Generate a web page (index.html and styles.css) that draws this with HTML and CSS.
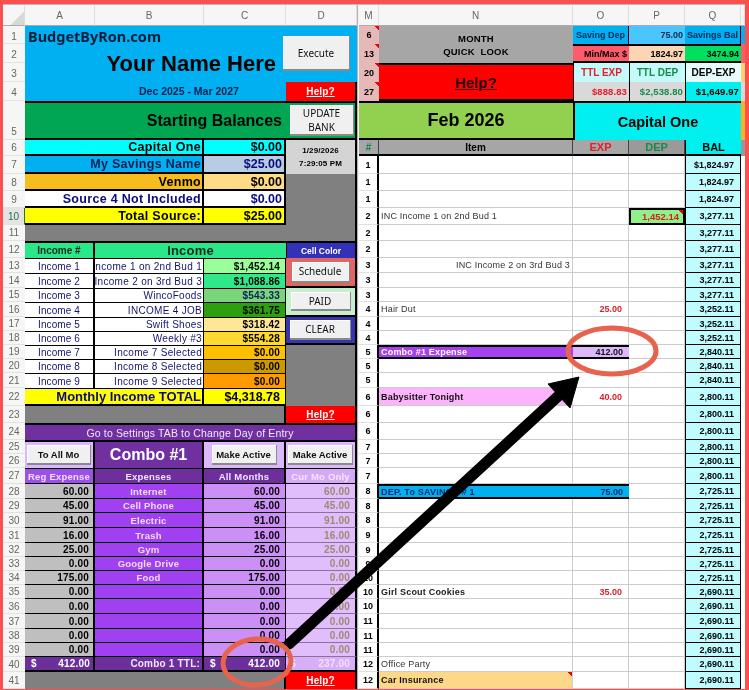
FILE: index.html
```html
<!DOCTYPE html>
<html lang="en">
<head>
<meta charset="utf-8">
<title>BudgetByRon</title>
<link rel="stylesheet" href="styles.css">
</head>
<body>
<table class="sheet">
<colgroup><col class="w-rh"><col class="w-a"><col class="w-b"><col class="w-c"><col class="w-d"><col class="w-s"><col class="w-m"><col class="w-n"><col class="w-o"><col class="w-o"><col class="w-o"><col class="w-r"></colgroup>
<tr class="h21"><td class="corner"></td><td class="ch">A</td><td class="ch">B</td><td class="ch">C</td><td class="ch">D</td><td class="split" rowspan="42"></td><td class="ch">M</td><td class="ch">N</td><td class="ch">O</td><td class="ch">P</td><td class="ch">Q</td><td class="ch"></td></tr>

<tr class="h18"><td class="rh rh-low">1</td>
<td class="blue" colspan="3" rowspan="4"><div class="title"><div class="brand">BudgetByRon.com</div><div class="owner">Your Name Here</div><div class="range">Dec 2025 - Mar 2027</div></div></td>
<td class="blue top visible" rowspan="3"><div class="btn execute">Execute</div></td>
<td class="pink tri">6</td><td class="quick" rowspan="2">MONTH<br>QUICK&nbsp; LOOK</td><td class="q-blue">Saving Dep</td><td class="q-blue2 num">75.00</td><td class="q-blue ctr">Savings Bal</td><td class="r-blue"></td></tr>
<tr class="h19"><td class="rh rh-low">2</td><td class="pink tri">13</td><td class="q-red num">Min/Max $</td><td class="q-peach num">1824.97</td><td class="q-green num">3474.94</td><td class="r-red"></td></tr>
<tr class="h19"><td class="rh rh-low">3</td><td class="pink tri">20</td><td class="bighelp" rowspan="2">Help?</td><td class="q-cy red-t big">TTL EXP</td><td class="q-cy green-t big">TTL DEP</td><td class="q-wh big">DEP-EXP</td><td class="r-or"></td></tr>
<tr class="h19"><td class="rh rh-low">4</td><td class="help">Help?</td><td class="pink tri">27</td><td class="q-gr red-t tot">$888.83</td><td class="q-gr green-t tot">$2,538.80</td><td class="q-cy2 tot">$1,649.97</td><td class="r-gr"></td></tr>

<tr class="h39"><td class="rh rh-b">5</td>
<td class="start" colspan="4"><div class="start-in"><span>Starting Balances</span><div class="btn update">UPDATE<br>BANK</div></div></td>
<td class="feb" colspan="2">Feb 2026</td><td class="capone" colspan="3">Capital One</td><td class="r-orange"></td></tr>

<tr class="h16"><td class="rh">6</td><td class="src cyan" colspan="2">Capital One</td><td class="amt cyan">$0.00</td>
<td class="stamp" rowspan="2">1/29/2026<br>7:29:05 PM</td>
<td class="hd green-t">#</td><td class="hd item">Item</td><td class="hd exp">EXP</td><td class="hd dep">DEP</td><td class="balhd">BAL</td><td class="r-dg"></td></tr>

<tr class="h18"><td class="rh">7</td><td class="src sav" colspan="2">My Savings Name</td><td class="amt sav2">$25.00</td><td class="mn">1</td><td class="n"></td><td class="o"></td><td class="o"></td><td class="bal">$1,824.97</td><td class="r-wh" rowspan="35"></td></tr>
<tr class="h17"><td class="rh">8</td><td class="src ven" colspan="2">Venmo</td><td class="amt ven2">$0.00</td><td class="gray" rowspan="3"></td><td class="mn">1</td><td class="n"></td><td class="o"></td><td class="o"></td><td class="bal">1,824.97</td></tr>
<tr class="h17"><td class="rh">9</td><td class="src white" colspan="2">Source 4 Not Included</td><td class="amt white">$0.00</td><td class="mn">1</td><td class="n"></td><td class="o"></td><td class="o"></td><td class="bal">1,824.97</td></tr>
<tr class="h17"><td class="rh rh-on">10</td><td class="src yel" colspan="2">Total Source:</td><td class="amt yel">$25.00</td><td class="mn">2</td><td class="n">INC Income 1 on 2nd Bud 1</td><td class="o"></td><td class="depbox tri">1,452.14</td><td class="bal">3,277.11</td></tr>
<tr class="h16"><td class="rh">11</td><td class="gray" colspan="4"></td><td class="mn">2</td><td class="n"></td><td class="o"></td><td class="o"></td><td class="bal">3,277.11</td></tr>

<tr class="h16"><td class="rh">12</td><td class="inc-h">Income #</td><td class="inc-t" colspan="2">Income</td><td class="cellcolor">Cell Color</td><td class="mn">2</td><td class="n"></td><td class="o"></td><td class="o"></td><td class="bal">3,277.11</td></tr>

<tr class="h15"><td class="rh">13</td><td class="ia">Income 1</td><td class="ib"><div class="clip">Income 1 on 2nd Bud 1</div></td><td class="ic c1">$1,452.14</td><td class="sched" rowspan="2"><div class="btn b-s">Schedule</div></td><td class="mn">3</td><td class="n right">INC Income 2 on 3rd Bud 3</td><td class="o"></td><td class="o"></td><td class="bal">3,277.11</td></tr>
<tr class="h15"><td class="rh">14</td><td class="ia">Income 2</td><td class="ib"><div class="clip">Income 2 on 3rd Bud 3</div></td><td class="ic c2">$1,088.86</td><td class="mn">3</td><td class="n"></td><td class="o"></td><td class="o"></td><td class="bal">3,277.11</td></tr>
<tr class="h14"><td class="rh">15</td><td class="ia">Income 3</td><td class="ib">WincoFoods</td><td class="ic c3">$543.33</td><td class="paid" rowspan="2"><div class="btn b-p">PAID</div></td><td class="mn">3</td><td class="n"></td><td class="o"></td><td class="o"></td><td class="bal">3,277.11</td></tr>
<tr class="h15"><td class="rh">16</td><td class="ia">Income 4</td><td class="ib">INCOME 4 JOB</td><td class="ic c4">$361.75</td><td class="mn">4</td><td class="n">Hair Dut</td><td class="o amt-r">25.00</td><td class="o"></td><td class="bal">3,252.11</td></tr>
<tr class="h14"><td class="rh">17</td><td class="ia">Income 5</td><td class="ib">Swift Shoes</td><td class="ic c5">$318.42</td><td class="clear" rowspan="2"><div class="btn b-c">CLEAR</div></td><td class="mn">4</td><td class="n"></td><td class="o"></td><td class="o"></td><td class="bal">3,252.11</td></tr>
<tr class="h14"><td class="rh">18</td><td class="ia">Income 6</td><td class="ib">Weekly #3</td><td class="ic c6">$554.28</td><td class="mn">4</td><td class="n"></td><td class="o"></td><td class="o"></td><td class="bal">3,252.11</td></tr>
<tr class="h14"><td class="rh">19</td><td class="ia">Income 7</td><td class="ib">Income 7 Selected</td><td class="ic c7">$0.00</td><td class="gray" rowspan="4"></td><td class="mn">5</td><td class="n combo">Combo #1 Expense</td><td class="o combo2">412.00</td><td class="o"></td><td class="bal">2,840.11</td></tr>
<tr class="h14"><td class="rh">20</td><td class="ia">Income 8</td><td class="ib">Income 8 Selected</td><td class="ic c8">$0.00</td><td class="mn">5</td><td class="n"></td><td class="o"></td><td class="o"></td><td class="bal">2,840.11</td></tr>
<tr class="h15"><td class="rh">21</td><td class="ia">Income 9</td><td class="ib">Income 9 Selected</td><td class="ic c9">$0.00</td><td class="mn">5</td><td class="n"></td><td class="o"></td><td class="o"></td><td class="bal">2,840.11</td></tr>
<tr class="h18"><td class="rh">22</td><td class="mt" colspan="2">Monthly Income TOTAL</td><td class="mt-v">$4,318.78</td><td class="mn pink tri">6</td><td class="n sitter">Babysitter Tonight</td><td class="o amt-r">40.00</td><td class="o"></td><td class="bal">2,800.11</td></tr>
<tr class="h17"><td class="rh">23</td><td class="gray" colspan="3"></td><td class="help">Help?</td><td class="mn pink tri">6</td><td class="n"></td><td class="o"></td><td class="o"></td><td class="bal">2,800.11</td></tr>
<tr class="h17"><td class="rh">24</td><td class="goto" colspan="4">Go to Settings TAB to Change Day of Entry</td><td class="mn pink tri">6</td><td class="n"></td><td class="o"></td><td class="o"></td><td class="bal">2,800.11</td></tr>
<tr class="h14"><td class="rh">25</td><td class="lav" rowspan="2"><div class="btn b-a">To All Mo</div></td><td class="combo-t" rowspan="2">Combo #1</td><td class="lav" rowspan="2"><div class="btn b-m">Make Active</div></td><td class="lav" rowspan="2"><div class="btn b-m">Make Active</div></td><td class="mn">7</td><td class="n"></td><td class="o"></td><td class="o"></td><td class="bal">2,800.11</td></tr>
<tr class="h14"><td class="rh">26</td><td class="mn">7</td><td class="n"></td><td class="o"></td><td class="o"></td><td class="bal">2,800.11</td></tr>
<tr class="h16"><td class="rh">27</td><td class="eh eh-a">Reg Expense</td><td class="eh">Expenses</td><td class="eh">All Months</td><td class="eh eh-d">Cur Mo Only</td><td class="mn">7</td><td class="n"></td><td class="o"></td><td class="o"></td><td class="bal">2,800.11</td></tr>

<tr class="h15"><td class="rh">28</td><td class="ea">60.00</td><td class="eb">Internet</td><td class="ec">60.00</td><td class="ed">60.00</td><td class="mn">8</td><td class="n blu">DEP. To SAVINGS # 1</td><td class="o blu2">75.00</td><td class="o"></td><td class="bal">2,725.11</td></tr>
<tr class="h14"><td class="rh">29</td><td class="ea">45.00</td><td class="eb">Cell Phone</td><td class="ec">45.00</td><td class="ed">45.00</td><td class="mn">8</td><td class="n"></td><td class="o"></td><td class="o"></td><td class="bal">2,725.11</td></tr>
<tr class="h15"><td class="rh">30</td><td class="ea">91.00</td><td class="eb">Electric</td><td class="ec">91.00</td><td class="ed">91.00</td><td class="mn">8</td><td class="n"></td><td class="o"></td><td class="o"></td><td class="bal">2,725.11</td></tr>
<tr class="h15"><td class="rh">31</td><td class="ea">16.00</td><td class="eb">Trash</td><td class="ec">16.00</td><td class="ed">16.00</td><td class="mn">9</td><td class="n"></td><td class="o"></td><td class="o"></td><td class="bal">2,725.11</td></tr>
<tr class="h14"><td class="rh">32</td><td class="ea">25.00</td><td class="eb">Gym</td><td class="ec">25.00</td><td class="ed">25.00</td><td class="mn">9</td><td class="n"></td><td class="o"></td><td class="o"></td><td class="bal">2,725.11</td></tr>
<tr class="h14"><td class="rh">33</td><td class="ea">0.00</td><td class="eb">Google Drive</td><td class="ec">0.00</td><td class="ed">0.00</td><td class="mn">9</td><td class="n"></td><td class="o"></td><td class="o"></td><td class="bal">2,725.11</td></tr>
<tr class="h14"><td class="rh">34</td><td class="ea">175.00</td><td class="eb">Food</td><td class="ec">175.00</td><td class="ed">0.00</td><td class="mn">10</td><td class="n"></td><td class="o"></td><td class="o"></td><td class="bal">2,725.11</td></tr>
<tr class="h14"><td class="rh">35</td><td class="ea">0.00</td><td class="eb"></td><td class="ec">0.00</td><td class="ed">0.00</td><td class="mn">10</td><td class="n bold">Girl Scout Cookies</td><td class="o amt-r">35.00</td><td class="o"></td><td class="bal">2,690.11</td></tr>
<tr class="h15"><td class="rh">36</td><td class="ea">0.00</td><td class="eb"></td><td class="ec">0.00</td><td class="ed">0.00</td><td class="mn">10</td><td class="n"></td><td class="o"></td><td class="o"></td><td class="bal">2,690.11</td></tr>
<tr class="h15"><td class="rh">37</td><td class="ea">0.00</td><td class="eb"></td><td class="ec">0.00</td><td class="ed">0.00</td><td class="mn">11</td><td class="n"></td><td class="o"></td><td class="o"></td><td class="bal">2,690.11</td></tr>
<tr class="h14"><td class="rh">38</td><td class="ea">0.00</td><td class="eb"></td><td class="ec">0.00</td><td class="ed">0.00</td><td class="mn">11</td><td class="n"></td><td class="o"></td><td class="o"></td><td class="bal">2,690.11</td></tr>
<tr class="h14"><td class="rh">39</td><td class="ea">0.00</td><td class="eb"></td><td class="ec">0.00</td><td class="ed">0.00</td><td class="mn">11</td><td class="n"></td><td class="o"></td><td class="o"></td><td class="bal">2,690.11</td></tr>
<tr class="h15"><td class="rh">40</td><td class="t-a"><span>$</span><span>412.00</span></td><td class="t-b">Combo 1 TTL:</td><td class="t-a t-c"><span>$</span><span>412.00</span></td><td class="t-a t-d"><span>$</span><span>237.00</span></td><td class="mn">12</td><td class="n reg">Office Party</td><td class="o"></td><td class="o"></td><td class="bal">2,690.11</td></tr>
<tr class="h17"><td class="rh">41</td><td class="gray" colspan="3"></td><td class="help">Help?</td><td class="mn">12</td><td class="n car tri">Car Insurance</td><td class="o"></td><td class="o"></td><td class="bal">2,690.11</td></tr>
</table>

<svg class="marks" width="749" height="690" viewBox="0 0 749 690" aria-hidden="true">
  <line class="shaft" x1="289" y1="644" x2="566" y2="389"/>
  <polygon class="head" points="579,377 548,384 570,408"/>
  <ellipse class="ring" cx="612" cy="351" rx="44" ry="23"/>
  <ellipse class="ring" cx="257" cy="662" rx="34" ry="23" transform="rotate(-4 257 662)"/>
</svg>
</body>
</html>
```
FILE: styles.css
```css
html, body { margin: 0; height: 690px; overflow: hidden; }
body { position: relative; background: #fb5050; padding: 4px 4px 0 3px; box-sizing: border-box; }

.sheet { border-collapse: separate; border-spacing: 0; table-layout: fixed; width: 742px; background: #fff; border-top: 1px solid #bbb; font: bold 9px "Liberation Sans", Arial, sans-serif; color: #000; filter: blur(.3px); }
.sheet td { padding: 0; box-sizing: border-box; white-space: nowrap; overflow: hidden; vertical-align: middle; }

.w-rh { width: 22px; } .w-a { width: 70px; } .w-b { width: 109px; } .w-c { width: 82px; } .w-d { width: 71px; }
.w-s { width: 2px; } .w-m { width: 20px; } .w-n { width: 194px; } .w-o { width: 56px; } .w-r { width: 4px; }

.h14 { height: 14px; } .h14 td { height: 14px; }
.h15 { height: 15px; } .h15 td { height: 15px; }
.h16 { height: 16px; } .h16 td { height: 16px; }
.h17 { height: 17px; } .h17 td { height: 17px; }
.h18 { height: 18px; } .h18 td { height: 18px; }
.h19 { height: 19px; } .h19 td { height: 19px; }
.h21 { height: 21px; } .h21 td { height: 21px; }
.h39 { height: 39px; } .h39 td { height: 39px; }

.corner { background: linear-gradient(135deg, #f6f6f6 66%, #d8d8d8 66%); border-right: 1px solid #ddd; border-bottom: 1px solid #aaa; }
.ch { background: #f6f6f6; color: #666; font-weight: normal; font-size: 10px; text-align: center; border-right: 1px solid #ddd; border-bottom: 1px solid #aaa; }
.rh { background: #f6f6f6; color: #666; font-weight: normal; font-size: 10px; text-align: center; border-bottom: 1px solid #e2e2e2; }
.sheet .rh-low { padding-top: 3px; }
.sheet .rh-b { vertical-align: bottom; padding-bottom: 2px; }
.sheet .rh-on { background: #e4e4e4; color: #217346; border-left: 0; border-right: 1px solid #217346; }
.split { background: #f2f2f2; border-left: 1px solid #b5b5b5; }

.blue { background: #00b0f0; }
.sheet .top { vertical-align: top; }
.sheet .visible { overflow: visible; }
.title { height: 75px; display: flex; flex-direction: column; }
.brand { font: bold 14.5px "Noto Sans", sans-serif; color: #0a1e3c; padding: 0 0 0 3px; line-height: 20px; height: 19px; }
.owner { font-size: 22px; line-height: 28px; text-align: right; padding-right: 10px; margin-top: 5px; }
.range { font-size: 10.5px; color: #0a1e50; padding-left: 114px; margin-top: 7px; line-height: 12px; }

.btn { display: flex; flex-direction: column; align-items: center; justify-content: center; background: #f0f0f0; color: #111; font: 400 10px/14px "Noto Sans", sans-serif; box-sizing: border-box; border-right: 1px solid #8a8a8a; border-bottom: 2px solid #8a8a8a; box-shadow: inset 1px 1px #fff; text-align: center; }
.execute { width: 67px; height: 35px; margin: 10px 0 0 -3px; position: relative; z-index: 1; }
.update { width: 64px; height: 31px; flex: none; margin-right: 1px; }
.b-s { width: 58px; height: 21px; margin: 0 auto; }
.b-p { width: 60px; height: 19px; margin: 0 auto; }
.b-c { width: 61px; height: 20px; margin: 0 auto; }
.b-a { width: 64px; height: 20px; margin: 0 auto; font: bold 9.5px "Liberation Sans", sans-serif; }
.b-m { width: 65px; height: 20px; margin: 0 auto; font: bold 9.5px "Liberation Sans", sans-serif; }

.help { background: #f00; color: #fff; font-size: 10px; letter-spacing: .1px; text-decoration: underline; text-align: center; border-right: 2px solid #000; }
.bighelp { background: #f00; color: #200; font-size: 15px; text-decoration: underline; text-align: center; border-top: 2px solid #000; border-bottom: 2px solid #000; border-left: 0; }
.pink { background: #e6b8b7; text-align: center; font-size: 9px; }
.tri { background-image: linear-gradient(225deg, #e00 3.5px, transparent 3.5px); }
.quick { background: #a6a6a6; font-size: 9.5px; line-height: 13px; text-align: center; padding-top: 2px; letter-spacing: .2px; }
.q-blue { background: #00b0f0; font-size: 9px; color: #062a55; text-align: center; border-right: 1px solid #000; }
.q-blue2 { background: #49c6ff; color: #062a55; }
.ctr { text-align: center; }
.num { text-align: right; font-size: 9px; }
.sheet .num { padding-right: 2px; }
.sheet .ctr { padding-right: 0; }
.q-red { background: #ff5b6b; border-top: 2px solid #000; border-bottom: 2px solid #000; }
.q-peach { background: #fcd5b4; border-top: 2px solid #000; border-bottom: 2px solid #000; }
.q-green { background: #00e060; border-top: 2px solid #000; border-bottom: 2px solid #000; }
.q-cy { background: #c4fafa; border-left: 1px solid #000; }
.q-wh { background: #e6fbfb; border-left: 1px solid #000; }
.q-gr { background: #d9d9d9; border-left: 1px solid #000; }
.q-cy2 { background: #00f0f0; border-left: 1px solid #000; }
.big { font-size: 10px; text-align: center; }
.tot { font-size: 9.5px; text-align: right; letter-spacing: .1px; }
.sheet .tot { padding-right: 2px; }
.red-t { color: #e0202a; }
.green-t { color: #178a4a; }
.r-blue { background: #00b0f0; }
.r-red { background: #ff5b6b; }
.r-or { background: #ffd27a; }
.r-gr { background: #d9d9d9; }
.r-orange { background: #ffb020; }
.r-dg { background: #999; }
.r-wh { background: #fff; }

.start { background: #00a651; border-top: 2px solid #000; border-bottom: 2px solid #000; border-right: 2px solid #000; }
.start-in { display: flex; justify-content: flex-end; align-items: center; gap: 8px; font-size: 16px; height: 35px; }
.feb { background: #92d050; font-size: 18px; text-align: center; border-top: 2px solid #000; border-bottom: 2px solid #000; }
.capone { background: #00f0f0; font-size: 14.5px; text-align: center; border-top: 2px solid #000; border-left: 2px solid #000; }

.src { font-size: 12.5px; letter-spacing: .3px; text-align: right; border-right: 2px solid #000; border-bottom: 2px solid #000; }
.sheet .src { padding-right: 1px; }
.sheet .amt { font-size: 12.5px; text-align: right; padding-right: 2px; border-right: 2px solid #000; border-bottom: 2px solid #000; }
.cyan { background: #00ffff; }
.sav { background: #00b0f0; color: #0c1e50; }
.sav2 { background: #b8cce4; color: #0b0b80; }
.ven { background: #f7bc1e; }
.ven2 { background: #ffdb85; }
.white { background: #fff; color: #0b0b80; }
.yel { background: #ff0; }
.stamp { background: #d4d4d4; font-size: 8px; line-height: 13px; text-align: center; border-right: 2px solid #000; letter-spacing: .1px; }
.sheet .stamp { vertical-align: top; padding-top: 4px; }
.gray { background: #808080; border-right: 2px solid #000; }

.hd { background: #a6a6a6; font-size: 10px; text-align: center; border-right: 1px solid #444; border-bottom: 2px solid #000; }
.item { font-size: 10px; }
.exp { color: #e0202a; font-size: 11px; }
.dep { color: #178a4a; font-size: 11px; background: #9a9a9a; }
.balhd { background: #00f0f0; font-size: 11px; text-align: center; border-bottom: 2px solid #000; border-left: 1px solid #000; }

.mn { background: #fff; font-size: 9px; text-align: center; border-right: 2px solid #000; border-bottom: 1px solid #e0e0e0; }
.n { font-weight: normal; color: #333; letter-spacing: .2px; border-right: 1px solid #ccc; border-bottom: 1px solid #ccc; }
.sheet .n { padding-left: 2px; }
.right { text-align: right; }
.sheet .right { padding-right: 2px; }
.reg { color: #333; }
.o { border-right: 1px solid #ccc; border-bottom: 1px solid #ccc; text-align: right; }
.sheet .o { padding-right: 6px; }
.amt-r { color: #e0202a; }
.bal { background: #bffcff; border: 1px solid #000; border-top: 0; text-align: right; }
.sheet .bal { padding-right: 6px; }
.depbox { background-color: #92f08a; color: #d42020; border: 2px solid #000; text-align: right; font-size: 9.5px; }
.sheet .depbox { padding-right: 4px; }

.sheet .combo { background: #a640f0; color: #fff; font-weight: bold; border-top: 2px solid #000; border-bottom: 2px solid #000; border-right: 0; }
.sheet .combo2 { background: #dcb8fa; border-top: 2px solid #000; border-bottom: 2px solid #000; border-right: 0; color: #111; }
.sheet .sitter { background: #fbb4fb; font-weight: bold; color: #111; }
.sheet .blu { background: #00b0f0; color: #0c2a6a; font-weight: bold; border-top: 2px solid #000; border-bottom: 2px solid #000; border-right: 0; }
.sheet .blu2 { background: #00b0f0; color: #0c2a6a; border-top: 2px solid #000; border-bottom: 2px solid #000; border-right: 0; }
.sheet .bold { font-weight: bold; color: #222; }
.sheet .car { background-color: #fdd888; font-weight: bold; color: #111; }

.inc-h { background: #2ae88a; font-size: 10px; text-align: center; border-top: 2px solid #000; border-right: 2px solid #000; color: #0a2a20; }
.inc-t { background: #2ae88a; font-size: 13px; text-align: center; border-top: 2px solid #000; color: #0a2a20; letter-spacing: .2px; }
.cellcolor { background: #3232b8; color: #fff; font-size: 8.5px; text-align: center; border-top: 2px solid #000; border-left: 1px solid #000; border-right: 2px solid #000; }
.ia { background: #fff; color: #14146e; font-size: 10px; font-weight: normal; text-align: center; letter-spacing: .1px; border-top: 1px solid #000; border-right: 2px solid #000; }
.ib { background: #fff; color: #14146e; font-size: 10px; font-weight: normal; text-align: right; letter-spacing: .3px; border-top: 1px solid #000; border-right: 1px solid #000; }
.sheet .ib { padding-right: 1px; }
.clip { display: flex; justify-content: flex-end; width: 107px; overflow: hidden; }
.ic { font-size: 10px; letter-spacing: .2px; text-align: right; border-top: 1px solid #000; border-right: 1px solid #000; }
.sheet .ic { padding-right: 5px; }
.c1 { background: #99ff99; } .c2 { background: #2ee88a; } .c3 { background: #7ad47a; color: #0c1e60; } .c4 { background: #2ca00e; }
.c5 { background: #ffe699; } .c6 { background: #ffd92f; } .c7 { background: #ffc000; } .c8 { background: #cc9900; } .c9 { background: #ff9a00; }
.sched { background: #e06666; border-bottom: 2px solid #000; border-right: 2px solid #000; }
.paid { background: #c6efce; border-bottom: 2px solid #000; border-right: 2px solid #000; }
.clear { background: #3535b0; border-bottom: 2px solid #000; border-right: 2px solid #000; }
.mt { background: #ff0; color: #0b0b80; font-size: 13px; text-align: right; border-top: 1px solid #000; border-right: 2px solid #000; border-bottom: 2px solid #000; }
.sheet .mt { padding-right: 1px; }
.mt-v { background: #ff0; font-size: 12.5px; text-align: right; border-top: 1px solid #000; border-right: 1px solid #000; border-bottom: 2px solid #000; }
.sheet .mt-v { padding-right: 5px; }
.goto { background: #7030a0; color: #f0e8f8; font-size: 10.5px; font-weight: normal; letter-spacing: .15px; text-align: center; border-top: 2px solid #000; border-right: 2px solid #000; }

.lav { background: #dcb8fa; border-top: 2px solid #000; border-right: 2px solid #000; }
.combo-t { background: #7030a0; color: #fff; font-size: 16px; text-align: center; border-top: 2px solid #000; border-right: 2px solid #000; }
.eh { background: #6c2f9c; color: #f2e4ff; font-size: 9.5px; text-align: center; letter-spacing: .2px; border-top: 1px solid #000; border-bottom: 1px solid #000; border-right: 2px solid #000; }
.eh-a { background: #9c50e8; color: #f0dcff; }
.eh-d { background: #d6a8f8; color: #f3e6ff; }
.ea { background: #bfbfbf; font-size: 10px; letter-spacing: .2px; text-align: right; border-bottom: 1px solid #000; border-right: 2px solid #000; }
.sheet .ea { padding-right: 4px; }
.eb { background: #a040f0; color: #ecdcff; font-size: 9.5px; letter-spacing: .2px; text-align: center; border-bottom: 1px solid #000; border-right: 2px solid #000; }
.ec { background: #cc8ff5; font-size: 10px; letter-spacing: .2px; text-align: right; border-bottom: 1px solid #000; border-right: 1px solid #000; }
.sheet .ec { padding-right: 5px; }
.ed { background: #e1bdfb; color: #9c8a72; font-size: 10px; letter-spacing: .2px; text-align: right; border-bottom: 1px solid #8a70a0; border-right: 2px solid #000; }
.sheet .ed { padding-right: 5px; }
.sheet .t-a { background: #6c2f9c; color: #fff; font-size: 10px; letter-spacing: .2px; border-bottom: 2px solid #000; border-right: 2px solid #000; padding: 0 3px 0 6px; }
.t-a span { float: left; }
.t-a span + span { float: right; }
.t-b { background: #6c2f9c; color: #f2e4ff; font-size: 10px; letter-spacing: .2px; text-align: right; border-bottom: 2px solid #000; border-right: 2px solid #000; }
.sheet .t-b { padding-right: 2px; }
.sheet .t-c { border-right: 1px solid #000; padding: 0 5px 0 6px; }
.sheet .t-d { background: #d9aef8; color: #f0e0ff; padding: 0 5px 0 4px; }

.marks { position: absolute; left: 0; top: 0; pointer-events: none; filter: blur(.4px); }
.shaft { stroke: #000; stroke-width: 11; stroke-linecap: round; }
.head { fill: #000; stroke: #000; stroke-width: 1; stroke-linejoin: round; }
.ring { fill: none; stroke: #e8634d; stroke-width: 5; }
```
